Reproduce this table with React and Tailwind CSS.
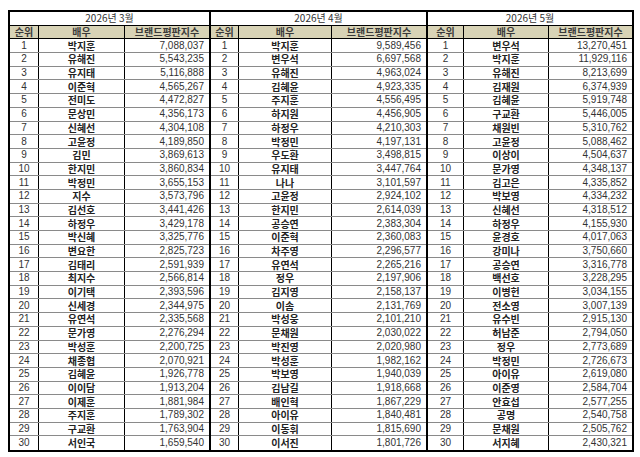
import React from "react";

const toRows = (s) =>
    s.trim().split("\n").map((line) => {
        const [rank, name, score] = line.trim().split(" ");
        return { rank, name, score };
    });

const march = toRows(`
1 박지훈 7,088,037
2 유해진 5,543,235
3 유지태 5,116,888
4 이준혁 4,565,267
5 전미도 4,472,827
6 문상민 4,356,173
7 신혜선 4,304,108
8 고윤정 4,189,850
9 김민 3,869,613
10 한지민 3,860,834
11 박정민 3,655,153
12 지수 3,573,796
13 김선호 3,441,426
14 하정우 3,429,178
15 박신혜 3,325,776
16 변요한 2,825,723
17 김태리 2,591,939
18 최지수 2,566,814
19 이기택 2,393,596
20 신세경 2,344,975
21 유연석 2,335,568
22 문가영 2,276,294
23 박성훈 2,200,725
24 채종협 2,070,921
25 김혜윤 1,926,778
26 이이담 1,913,204
27 이제훈 1,881,984
28 주지훈 1,789,302
29 구교환 1,763,904
30 서인국 1,659,540
`);

const april = toRows(`
1 박지훈 9,589,456
2 변우석 6,697,568
3 유해진 4,963,024
4 김혜윤 4,923,335
5 주지훈 4,556,495
6 하지원 4,456,905
7 하정우 4,210,303
8 박정민 4,197,131
9 우도환 3,498,815
10 유지태 3,447,764
11 나나 3,101,597
12 고윤정 2,924,102
13 한지민 2,614,039
14 공승연 2,383,304
15 이준혁 2,360,083
16 차주영 2,296,577
17 유연석 2,265,216
18 정우 2,197,906
19 김지영 2,158,137
20 이솜 2,131,769
21 박성웅 2,101,210
22 문채원 2,030,022
23 박진영 2,020,980
24 박성훈 1,982,162
25 박보영 1,940,039
26 김남길 1,918,668
27 배인혁 1,867,229
28 아이유 1,840,481
29 이동휘 1,815,690
30 이서진 1,801,726
`);

const may = toRows(`
1 변우석 13,270,451
2 박지훈 11,929,116
3 유해진 8,213,699
4 김재원 6,374,939
5 김혜윤 5,919,748
6 구교환 5,446,005
7 채원빈 5,310,762
8 고윤정 5,088,462
9 이상이 4,504,637
10 문가영 4,348,137
11 김고은 4,335,852
12 박보영 4,334,232
13 신혜선 4,318,512
14 하정우 4,155,930
15 윤경호 4,017,063
16 강미나 3,750,660
17 공승연 3,316,778
18 백선호 3,228,295
19 이병헌 3,034,155
20 전소영 3,007,139
21 유수빈 2,915,130
22 허남준 2,794,050
23 정우 2,773,689
24 박정민 2,726,673
25 아이유 2,619,080
26 이준영 2,584,704
27 안효섭 2,577,255
28 공명 2,540,758
29 문채원 2,505,762
30 서지혜 2,430,321
`);

function RankTable({ title, rows, width, rankW, nameW, first }) {
    return (
        <div
            style={{ width }}
            className={`flex-shrink-0 border-y-2 border-r-2 border-black ${first ? "border-l-2" : ""}`}
        >
            <div className="h-[13.7px] flex items-center justify-center border-b border-black text-[10px] text-[#333] leading-none">
                {title}
            </div>
            <div className="h-[13.7px] flex bg-[#d8d3b6] border-b border-black text-[10px] font-bold text-[#3a3a3a] leading-none">
                <div style={{ width: rankW }} className="flex items-center justify-center border-r border-black">순위</div>
                <div style={{ width: nameW }} className="flex items-center justify-center border-r border-black">배우</div>
                <div className="flex-1 flex items-center justify-center">브랜드평판지수</div>
            </div>
            {rows.map((r, i) => (
                <div
                    key={r.rank}
                    className={`h-[13.7px] flex leading-none ${i < rows.length - 1 ? "border-b border-[#8a8a8a]" : ""}`}
                >
                    <div style={{ width: rankW }} className="flex items-center justify-center border-r border-black text-[10px] text-[#333] font-['Liberation_Sans',sans-serif]">
                        {r.rank}
                    </div>
                    <div style={{ width: nameW }} className="flex items-center justify-center border-r border-black text-[10px] font-bold text-[#222]">
                        {r.name}
                    </div>
                    <div className="flex-1 flex items-center justify-end pr-[5px] text-[10px] text-[#333] font-['Liberation_Sans',sans-serif]">
                        {r.score}
                    </div>
                </div>
            ))}
        </div>
    );
}

export default function App() {
    return (
        <div className="w-[640px] h-[457px] bg-white pt-[10px] pl-[8px] font-['Noto_Sans_CJK_KR','Noto_Sans',sans-serif]">
            <div className="flex">
                <RankTable title="2026년 3월" rows={march} width={203} rankW={29} nameW={86} first />
                <RankTable title="2026년 4월" rows={april} width={217} rankW={28} nameW={93} />
                <RankTable title="2026년 5월" rows={may} width={206} rankW={36} nameW={85} />
            </div>
        </div>
    );
}
